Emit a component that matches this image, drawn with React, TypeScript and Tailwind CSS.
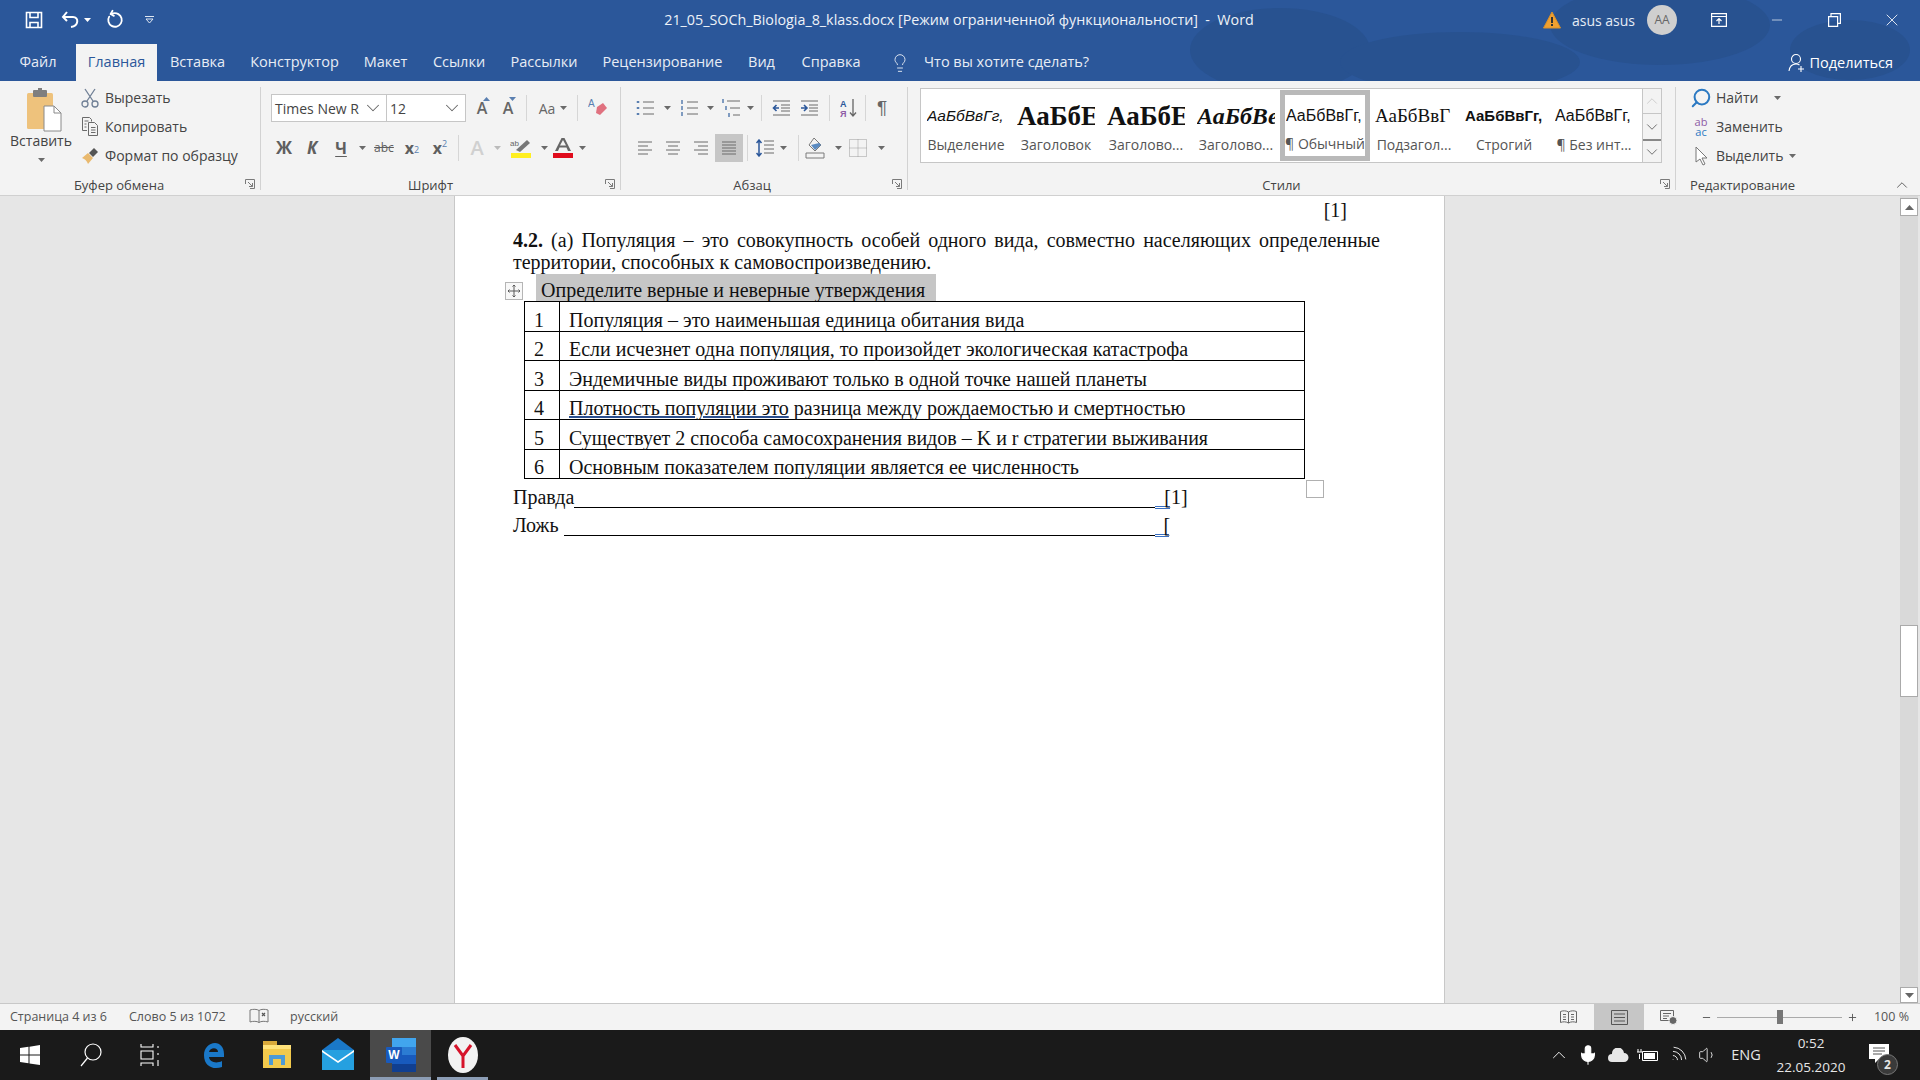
import type { ReactNode } from "react";
import { RotateCcw, Lightbulb, ChevronUp, ChevronDown, Minus, Plus, X, Search, Mic, Wifi, Volume1 } from "lucide-react";

const TABS = [
  { label: "Файл", w: "w-[76px]" },
  { label: "Главная", w: "w-[81px]", active: true },
  { label: "Вставка", w: "w-[81px]" },
  { label: "Конструктор", w: "w-[113px]" },
  { label: "Макет", w: "w-[69px]" },
  { label: "Ссылки", w: "w-[78px]" },
  { label: "Рассылки", w: "w-[92px]" },
  { label: "Рецензирование", w: "w-[145px]" },
  { label: "Вид", w: "w-[53px]" },
  { label: "Справка", w: "w-[86px]" },
];

const STYLES = [
  { sample: "АаБбВвГг,", label: "Выделение", cls: "italic text-[15.5px] font-['Liberation_Sans']" },
  { sample: "АаБбЕ", label: "Заголовок", cls: "font-bold text-[27px] font-['Liberation_Serif']" },
  { sample: "АаБбЕ", label: "Заголово...", cls: "font-bold text-[27px] font-['Liberation_Serif']" },
  { sample: "АаБбВе", label: "Заголово...", cls: "font-bold italic text-[24px] font-['Liberation_Serif']" },
  { sample: "АаБбВвГг,", label: "¶ Обычный", cls: "text-[16px] font-['Liberation_Sans']", selected: true },
  { sample: "АаБбВвГ", label: "Подзагол...", cls: "text-[19px] font-['Liberation_Serif']" },
  { sample: "АаБбВвГг,", label: "Строгий", cls: "font-bold text-[15px] font-['Liberation_Sans']" },
  { sample: "АаБбВвГг,", label: "¶ Без инт...", cls: "text-[16px] font-['Liberation_Sans']" },
];

const ROWS = [
  "Популяция – это наименьшая единица обитания вида",
  "Если исчезнет одна популяция, то произойдет экологическая катастрофа",
  "Эндемичные виды проживают только в одной точке нашей планеты",
  "",
  "Существует 2 способа самосохранения видов – K и r стратегии выживания",
  "Основным показателем популяции является ее численность",
];

function Caret({ className = "" }: { className?: string }) {
  return (
    <svg width="7" height="4" viewBox="0 0 7 4" className={className}>
      <path d="M0 0h7L3.5 4z" fill="#6a6a6a" />
    </svg>
  );
}

function Cell({ className = "", children }: { className?: string; children?: ReactNode }) {
  return <div className={`flex items-center justify-center shrink-0 ${className}`}>{children}</div>;
}

function Launcher() {
  return (
    <svg width="10" height="10" viewBox="0 0 10 10" className="absolute right-[5px] bottom-[6px]" fill="none" stroke="#7a7a7a">
      <path d="M.5 5V.5H9.5V9.5H5" />
      <path d="M3 3l4.5 4.5M7.5 4v3.5H4" />
    </svg>
  );
}

function Group({ label, width, labelCls, children }: { label: string; width: string; labelCls: string; children: ReactNode }) {
  return (
    <div className={`relative flex flex-col shrink-0 h-full pt-[13px] ${width}`}>
      <div className="flex flex-col gap-[12px]">{children}</div>
      <div className={`mt-auto h-[22px] pt-[3px] flex items-center justify-center text-[13px] text-[#444] ${labelCls}`}>{label}</div>
    </div>
  );
}

function Divider() {
  return <div className="w-px h-[103px] mt-[6px] bg-[#d2d2d2] shrink-0" />;
}

function MiniSep() {
  return <div className="w-px h-[26px] bg-[#d6d6d6] shrink-0" />;
}

function Lines({ kind }: { kind: "left" | "center" | "right" | "justify" }) {
  const d = {
    left: "M1 2h14M1 6h10M1 10h14M1 14h10",
    center: "M1 2h14M3 6h10M1 10h14M3 14h10",
    right: "M1 2h14M5 6h10M1 10h14M5 14h10",
    justify: "M1 2h14M1 5h14M1 8h14M1 11h14M1 14h14",
  }[kind];
  return (
    <svg width="16" height="16" viewBox="0 0 16 16" fill="none" stroke="#6a6a6a">
      <path d={d} />
    </svg>
  );
}

function PasteIcon() {
  return (
    <svg width="36" height="44" viewBox="0 0 36 44" className="ml-[8px]">
      <rect x="0" y="5" width="26" height="36" rx="1.5" fill="#eec27c" />
      <rect x="6" y="2" width="14" height="7" rx="1" fill="#7f7f7f" />
      <rect x="11" y="0" width="4" height="4" fill="#7f7f7f" />
      <path d="M17 18h10l7 7v18H17z" fill="#fff" stroke="#8a8a8a" />
      <path d="M27 18v7h7" fill="none" stroke="#8a8a8a" />
    </svg>
  );
}

function CutIcon() {
  return (
    <svg width="18" height="20" viewBox="0 0 18 20" fill="none" stroke="#6f7f95" strokeWidth="1.3">
      <path d="M4 1l8 12M14 1L6 13" />
      <circle cx="4" cy="16" r="3" />
      <circle cx="14" cy="16" r="3" />
    </svg>
  );
}

function CopyIcon() {
  return (
    <svg width="18" height="19" viewBox="0 0 18 19" fill="none" stroke="#6a6a6a">
      <path d="M6 13.5H1.5v-13h7l2 2v2" />
      <path d="M7.5 5.5h6l3 3v10h-9z" fill="#f3f3f3" />
      <path d="M3.5 4h4M3.5 7h2M3.5 10h2M10 10.5h4.5M10 13h4.5M10 15.5h4.5" />
    </svg>
  );
}

function PainterIcon() {
  return (
    <svg width="18" height="18" viewBox="0 0 18 18">
      <path d="M1 11l6-5 5 5-5 6c-1-3-3-5-6-6z" fill="#e9b96e" />
      <path d="M8 6l5-5 4 4-5 5z" fill="#555" />
    </svg>
  );
}

function BigA({ size }: { size: "up" | "down" }) {
  return (
    <div className="relative text-[16px] font-semibold text-[#666] leading-none">
      A
      <svg width="7" height="4" viewBox="0 0 7 4" className="absolute -top-[3px] -right-[3px]">
        <path d={size === "up" ? "M0 4h7L3.5 0z" : "M0 0h7L3.5 4z"} fill="#5a7fb0" />
      </svg>
    </div>
  );
}

function Eraser() {
  return (
    <svg width="20" height="20" viewBox="0 0 20 20">
      <path d="M9 9l6-4 4 5-7 7-4-2z" fill="#e0717f" />
      <text x="0" y="9" fontSize="10" fill="#5a7fb0" fontFamily="Liberation Sans">A</text>
    </svg>
  );
}

function UserPlus() {
  return (
    <svg width="18" height="20" viewBox="0 0 18 20" fill="none" stroke="#fff" strokeWidth="1.1">
      <circle cx="8" cy="6" r="4.5" />
      <path d="M1 18c.5-4 3-7 7-7 1.5 0 2.5.3 3.5 1M13 13v6M10 16h6" />
    </svg>
  );
}

function BlobBackdrop() {
  return (
    <svg className="absolute top-0 right-0 pointer-events-none" width="760" height="81" viewBox="0 0 760 81" fill="#285290">
      <ellipse cx="120" cy="50" rx="90" ry="42" />
      <ellipse cx="300" cy="62" rx="120" ry="30" />
      <ellipse cx="500" cy="25" rx="110" ry="40" />
      <ellipse cx="690" cy="50" rx="60" ry="30" />
    </svg>
  );
}

function TitleBar() {
  return (
    <div className="relative flex items-center h-[44px] pb-[4px] shrink-0 text-white">
      <Cell className="w-[20px] ml-[24px]">
        <svg width="18" height="18" viewBox="0 0 18 18" fill="none" stroke="#fff" strokeWidth="1.6">
          <path d="M1.5 1.5h15v15h-15z" />
          <path d="M5 1.5v5h8v-5M5 16.5v-5h8v5" />
        </svg>
      </Cell>
      <Cell className="w-[24px] ml-[15px]">
        <svg width="20" height="18" viewBox="0 0 20 18" fill="none" stroke="#fff" strokeWidth="2">
          <path d="M6 1L2 6l4 4" />
          <path d="M2 6h10c6 0 6 9-2 10" />
        </svg>
      </Cell>
      <Caret className="ml-[1px] [&>path]:fill-white" />
      <Cell className="w-[20px] ml-[14px]">
        <RotateCcw className="w-[18px] h-[18px] rotate-[30deg]" strokeWidth={2.4} />
      </Cell>
      <Cell className="w-[10px] ml-[19px]">
        <svg width="9" height="9" viewBox="0 0 9 9" fill="none" stroke="#dfe7f2">
          <path d="M0 .5h9M1 3l3.5 4L8 3z" />
        </svg>
      </Cell>
      <div className="absolute left-[664px] w-[590px] text-center text-[14.3px] text-[#eef2f8] whitespace-pre">
        21_05_SOCh_Biologia_8_klass.docx [Режим ограниченной функциональности]  -  Word
      </div>
      <div className="ml-auto flex items-center h-full">
        <svg width="18" height="18" viewBox="0 0 18 18">
          <path d="M9 1l8.5 16H.5z" fill="#f0a030" stroke="#d9902a" />
          <path d="M8 6h2v6H8zM8 13h2v2H8z" fill="#333" />
        </svg>
        <span className="ml-[11px] text-[14px] text-[#e6ecf5]">asus asus</span>
        <div className="ml-[12px] w-[30px] h-[30px] rounded-full bg-[#cfcfcf] flex items-center justify-center text-[12px] text-[#666]">AA</div>
        <Cell className="w-[58px] ml-[13px]">
          <svg width="16" height="14" viewBox="0 0 16 14" fill="none" stroke="#fff" strokeWidth="1.2">
            <path d="M.6.6h14.8v12.8H.6zM.6 3.5h14.8M8 11V6M5.5 8L8 5.5 10.500 8" />
          </svg>
        </Cell>
        <Cell className="w-[58px]">
          <Minus className="w-[16px] h-[16px] text-white" strokeWidth={1} />
        </Cell>
        <Cell className="w-[57px]">
          <svg width="13" height="14" viewBox="0 0 13 14" fill="none" stroke="#fff" strokeWidth="1.2">
            <path d="M.6 3.6h9v9.800h-9zM3 3.600V.6h9.400v9.800H9.600" />
          </svg>
        </Cell>
        <Cell className="w-[57px]">
          <X className="w-[20px] h-[20px] text-white" strokeWidth={1} />
        </Cell>
      </div>
    </div>
  );
}

function TabBar() {
  return (
    <div className="relative flex items-stretch h-[37px] shrink-0 text-[14.5px] text-[#e8edf5]">
      {TABS.map((t) => (
        <div key={t.label} className={`flex items-center justify-center shrink-0 pb-[2px] ${t.w} ${t.active ? "bg-[#f3f3f3] text-[#2b579a]" : ""}`}>
          {t.label}
        </div>
      ))}
      <Cell className="w-[20px] ml-[16px]">
        <Lightbulb className="w-[22px] h-[22px]" strokeWidth={1.1} />
      </Cell>
      <span className="ml-[14px] self-center pb-[2px]">Что вы хотите сделать?</span>
      <div className="ml-auto mr-[27px] flex items-center gap-[3px] text-white">
        <UserPlus />
        <span>Поделиться</span>
      </div>
    </div>
  );
}

function Ribbon() {
  return (
    <div className="flex h-[115px] shrink-0 bg-[#f3f3f3] border-b border-[#d0d0d0] text-[14px] text-[#444]">
      {/* clipboard */}
      <div className="relative flex flex-col shrink-0 w-[260px] h-full">
        <div className="flex h-[92px]">
          <div className="flex flex-col items-center w-[82px] pt-[7px] shrink-0">
            <PasteIcon />
            <span className="leading-[18px]">Вставить</span>
            <Caret className="mt-[8px]" />
          </div>
          <div className="flex flex-col pt-[2px] -ml-[1px]">
            <div className="flex items-center h-[29px] gap-[6px]">
              <Cell className="w-[18px]"><CutIcon /></Cell>Вырезать
            </div>
            <div className="flex items-center h-[29px] gap-[6px]">
              <Cell className="w-[18px]"><CopyIcon /></Cell>Копировать
            </div>
            <div className="flex items-center h-[29px] gap-[6px]">
              <Cell className="w-[18px]"><PainterIcon /></Cell>Формат по образцу
            </div>
          </div>
        </div>
        <div className="mt-auto h-[22px] pt-[3px] flex items-center justify-center text-[13px] pr-[22px]">Буфер обмена</div>
        <Launcher />
      </div>
      <Divider />

      {/* font */}
      <Group label="Шрифт" width="w-[359px] pl-[10px]" labelCls="pr-[30px]">
        <div className="flex items-center h-[28px]">
          <div className="flex h-[28px] w-[195px] shrink-0 bg-white border border-[#c6c6c6]">
            <div className="w-[115px] flex items-center justify-between pl-[3px] pr-[2px] border-r border-[#c6c6c6] whitespace-nowrap overflow-hidden">
              <span>Times New R</span>
              <ChevronDown className="w-[22px] h-[22px] shrink-0 text-[#666]" strokeWidth={1.1} />
            </div>
            <div className="flex-1 flex items-center justify-between pl-[3px] pr-[2px]">
              <span>12</span>
              <ChevronDown className="w-[22px] h-[22px] text-[#666]" strokeWidth={1.1} />
            </div>
          </div>
          <Cell className="w-[24px] ml-[4px]"><BigA size="up" /></Cell>
          <Cell className="w-[24px] ml-[2px]"><BigA size="down" /></Cell>
          <div className="ml-[6px]"><MiniSep /></div>
          <Cell className="w-[34px] pl-[6px] gap-[4px] text-[#666]">Aa</Cell>
          <Caret className="-ml-[1px]" />
          <div className="ml-[10px]"><MiniSep /></div>
          <Cell className="w-[40px]"><Eraser /></Cell>
        </div>
        <div className="flex items-center h-[28px] text-[#5f5f5f]">
          <Cell className="w-[26px] font-bold text-[17px]">Ж</Cell>
          <Cell className="w-[30px] font-bold italic text-[17px]">К</Cell>
          <Cell className="w-[28px] font-bold text-[16px] underline underline-offset-2">Ч</Cell>
          <Cell className="w-[14px]"><Caret /></Cell>
          <Cell className="w-[30px] text-[12px] line-through">abc</Cell>
          <Cell className="w-[26px] font-bold text-[16px]">x<sub className="text-[9px] font-normal text-[#5a7fb0]">2</sub></Cell>
          <Cell className="w-[30px] font-bold text-[16px]">x<sup className="text-[9px] font-normal text-[#5a7fb0]">2</sup></Cell>
          <Cell className="w-[7px]"><MiniSep /></Cell>
          <Cell className="w-[30px] text-[20px] text-[#d0d0d0] font-semibold">A</Cell>
          <Cell className="w-[10px]"><Caret className="opacity-40" /></Cell>
          <Cell className="w-[38px]">
            <svg width="22" height="20" viewBox="0 0 22 20">
              <text x="0" y="8" fontSize="8" fill="#666" fontFamily="Liberation Sans">ab</text>
              <path d="M6 12L17 2l3 3-10 9z" fill="#777" />
              <rect x="1" y="15" width="20" height="5" fill="#ffef20" />
            </svg>
          </Cell>
          <Cell className="w-[8px]"><Caret /></Cell>
          <Cell className="w-[30px]">
            <svg width="22" height="22" viewBox="0 0 22 22" className="shrink-0">
              <path d="M3 14L9.500 1h3L19 14h-3l-1.500-3.500h-7L6 14zM8 8.500h6L11 3z" fill="#666" />
              <rect x="1" y="16" width="20" height="5" fill="#e00b1c" />
            </svg>
          </Cell>
          <Cell className="w-[8px]"><Caret /></Cell>
        </div>
        <Launcher />
      </Group>
      <Divider />

      {/* paragraph */}
      <Group label="Абзац" width="w-[286px] pl-[10px]" labelCls="pr-[34px]">
        <div className="flex items-center h-[28px]">
          <Cell className="w-[28px]">
            <svg width="18" height="16" viewBox="0 0 18 16" fill="none" stroke="#6a6a6a">
              <path d="M7 2h11M7 8h11M7 14h11" />
              <path d="M2 1v2M2 7v2M2 13v2" stroke="#5a7fb0" strokeWidth="2.500" />
            </svg>
          </Cell>
          <Cell className="w-[16px]"><Caret /></Cell>
          <Cell className="w-[28px]">
            <svg width="18" height="18" viewBox="0 0 18 18" fill="none" stroke="#6a6a6a">
              <path d="M7 3h11M7 9h11M7 15h11" />
              <path d="M2 1v4M2 7v4M2 13v4" stroke="#5a7fb0" strokeWidth="1.500" />
            </svg>
          </Cell>
          <Cell className="w-[14px]"><Caret /></Cell>
          <Cell className="w-[28px]">
            <svg width="20" height="18" viewBox="0 0 20 18" fill="none" stroke="#6a6a6a">
              <path d="M6 2h13M9 9h10M12 16h7" />
              <path d="M2 0v4M5 7v4M8 14v4" stroke="#5a7fb0" strokeWidth="1.500" />
            </svg>
          </Cell>
          <Cell className="w-[10px]"><Caret /></Cell>
          <Cell className="w-[12px]"><MiniSep /></Cell>
          <Cell className="w-[28px]">
            <svg width="18" height="16" viewBox="0 0 18 16" fill="none" stroke="#6a6a6a">
              <path d="M1 1h17M9 5h9M9 8h9M9 11h9M1 15h17" />
              <path d="M7 8H2M4.500 5L1.500 8l3 3" stroke="#2b579a" strokeWidth="1.600" />
            </svg>
          </Cell>
          <Cell className="w-[28px]">
            <svg width="18" height="16" viewBox="0 0 18 16" fill="none" stroke="#6a6a6a">
              <path d="M1 1h17M9 5h9M9 8h9M9 11h9M1 15h17" />
              <path d="M1 8h5M4 5l3 3-3 3" stroke="#2b579a" strokeWidth="1.600" />
            </svg>
          </Cell>
          <Cell className="w-[12px]"><MiniSep /></Cell>
          <Cell className="w-[28px]">
            <svg width="18" height="20" viewBox="0 0 18 20" fill="none">
              <text x="0" y="9" fontSize="9" fontWeight="700" fill="#2b579a" fontFamily="Liberation Sans">А</text>
              <text x="0" y="19" fontSize="9" fontWeight="700" fill="#8e5ba6" fontFamily="Liberation Sans">Я</text>
              <path d="M13 1v17M10 14.500l3 3.500 3-3.500" stroke="#666" strokeWidth="1.300" />
            </svg>
          </Cell>
          <Cell className="w-[4px]"><MiniSep /></Cell>
          <Cell className="w-[30px] text-[19px] text-[#666] font-['Liberation_Sans']">¶</Cell>
        </div>
        <div className="flex items-center h-[28px]">
          <Cell className="w-[28px]"><Lines kind="left" /></Cell>
          <Cell className="w-[28px]"><Lines kind="center" /></Cell>
          <Cell className="w-[28px]"><Lines kind="right" /></Cell>
          <Cell className="w-[28px] h-[28px] bg-[#c6c6c6]"><Lines kind="justify" /></Cell>
          <Cell className="w-[9px]"><MiniSep /></Cell>
          <Cell className="w-[26px]">
            <svg width="18" height="18" viewBox="0 0 18 18" fill="none" stroke="#6a6a6a">
              <path d="M8 2h10M8 6h10M8 10h10M8 14h10" />
              <path d="M3 1v16M.5 4L3 1l2.500 3M.5 14L3 17l2.500-3" stroke="#2b579a" strokeWidth="1.500" />
            </svg>
          </Cell>
          <Cell className="w-[10px]"><Caret /></Cell>
          <Cell className="w-[20px]"><MiniSep /></Cell>
          <Cell className="w-[16px]">
            <svg width="22" height="22" viewBox="0 0 22 22" fill="none" stroke="#7a7a7a" className="shrink-0">
              <path d="M9 1l7 7-6 6-6-6z" />
              <path d="M14 6l-8 2 4 5 6-5z" fill="#5a8ac0" stroke="none" />
              <path d="M1 16h18v5H1z" fill="#f3f3f3" />
            </svg>
          </Cell>
          <Cell className="w-[28px]"><Caret /></Cell>
          <Cell className="w-[12px]">
            <svg width="18" height="18" viewBox="0 0 18 18" fill="none" stroke="#9a9a9a" strokeDasharray="1 1" className="shrink-0">
              <path d="M.5.5h17v17H.5zM9 .5v17M.5 9h17" />
            </svg>
          </Cell>
          <Cell className="w-[34px]"><Caret /></Cell>
        </div>
        <Launcher />
      </Group>
      <Divider />

      {/* styles */}
      <Group label="Стили" width="w-[767px] pl-[12px]" labelCls="pr-[32px]">
        <div className="flex h-[75px] -mt-[6px]">
          <div className="flex w-[722px] shrink-0 bg-white border border-[#c6c6c6] border-r-0 overflow-hidden">
            {STYLES.map((s, i) => (
              <div
                key={i}
                className={`flex flex-col items-center shrink-0 w-[90px] overflow-hidden ${
                  s.selected ? "mt-[1px] h-[71px] pt-[2px] border-[5px] border-[#b9b9b9] -mx-[1px]" : "pt-[8px]"
                }`}
              >
                <div className={`h-[38px] w-[78px] shrink-0 flex items-center justify-start overflow-hidden whitespace-nowrap text-[#111] ${s.cls}`}>
                  {s.sample}
                </div>
                <div className={`text-[14px] leading-[20px] text-[#555] whitespace-nowrap ${s.selected ? "-mt-[1px]" : ""}`}>{s.label}</div>
              </div>
            ))}
          </div>
          <div className="flex flex-col w-[20px] shrink-0 border border-[#c6c6c6] bg-[#f3f3f3]">
            <Cell className="h-[25px] border-b border-[#c6c6c6]">
              <ChevronUp className="w-[20px] h-[20px] text-[#c6c6c6]" strokeWidth={1.1} />
            </Cell>
            <Cell className="h-[25px]">
              <ChevronDown className="w-[20px] h-[20px] text-[#555]" strokeWidth={1.1} />
            </Cell>
            <Cell className="flex-1 border-t-2 border-[#888]">
              <ChevronDown className="w-[20px] h-[20px] text-[#555]" strokeWidth={1.1} />
            </Cell>
          </div>
        </div>
        <Launcher />
      </Group>
      <Divider />

      {/* editing */}
      <div className="relative flex flex-col shrink-0 w-[133px] h-full pl-[16px]">
        <div className="flex flex-col pt-[2px]">
          <div className="flex items-center h-[29px] gap-[6px]">
            <Cell className="w-[18px]">
              <Search className="w-[22px] h-[22px] shrink-0 text-[#2b79c2] -scale-x-100" strokeWidth={2.2} />
            </Cell>
            Найти
            <Caret className="ml-[9px]" />
          </div>
          <div className="flex items-center h-[29px] gap-[6px]">
            <div className="w-[18px] shrink-0 flex flex-col items-center text-[11px] leading-[10px]">
              <span className="text-[#8e5ba6]">ab</span>
              <span className="text-[#2b79c2]">ac</span>
            </div>
            Заменить
          </div>
          <div className="flex items-center h-[29px] gap-[6px]">
            <Cell className="w-[18px]">
              <svg width="14" height="20" viewBox="0 0 14 20" fill="#fff" stroke="#777">
                <path d="M2 1v15l4-3 3 6 2-1-3-6h5z" />
              </svg>
            </Cell>
            Выделить
            <Caret />
          </div>
        </div>
        <div className="mt-auto h-[22px] pt-[3px] flex items-center justify-center text-[13px] -ml-[16px]">Редактирование</div>
      </div>
      <div className="flex-1 flex items-end justify-end pr-[9px] pb-[1px]">
        <ChevronUp className="w-[18px] h-[18px] text-[#555]" strokeWidth={1.2} />
      </div>
    </div>
  );
}

function Page() {
  return (
    <div className="relative w-[991px] h-full bg-white border-x border-[#c8c8c8] pl-[58px] pt-[3px] text-[20px] leading-[22px] text-[#111] font-['Liberation_Serif']">
      <div className="text-right pr-[97px]">[1]</div>
      <p className="mt-[8px] w-[867px] text-justify">
        <b>4.2.</b> (а) Популяция – это совокупность особей одного вида, совместно населяющих определенные территории, способных к самовоспроизведению.
      </p>
      <div className="relative ml-[23px] mt-[1px] w-[400px] h-[27px] bg-[#c6c6c6] pl-[5px] flex items-end whitespace-nowrap">
        Определите верные и неверные утверждения
        <div className="absolute -left-[31px] top-[8px] w-[18px] h-[18px] border border-[#b5b5b5] bg-[#f8f8f8] flex items-center justify-center">
          <svg width="14" height="14" viewBox="0 0 14 14" fill="none" stroke="#5a5a5a">
            <path d="M7 1v12M1 7h12M5.500 2.500L7 1l1.500 1.500M5.500 11.500L7 13l1.500-1.500M2.500 5.500L1 7l1.500 1.500M11.500 5.500L13 7l-1.500 1.500" />
          </svg>
        </div>
      </div>
      <div className="relative ml-[11px] w-[781px]">
        <table className="w-[781px] border-collapse border border-black leading-[21px]">
          <tbody>
            {ROWS.map((r, i) => (
              <tr key={i} className="h-[29.5px]">
                <td className="w-[35px] border border-black pl-[9px] text-left align-bottom">{i + 1}</td>
                <td className="border border-black pl-[9px] align-bottom whitespace-nowrap">
                  {i === 3 ? (
                    <>
                      <span className="underline decoration-[#2b4f8f] underline-offset-[1px]">Плотность популяции это</span> разница между рождаемостью и смертностью
                    </>
                  ) : (
                    r
                  )}
                </td>
              </tr>
            ))}
          </tbody>
        </table>
        <div className="absolute -right-[19px] -bottom-[19px] w-[18px] h-[18px] border border-[#b0b0b0] bg-white" />
      </div>
      <div className="mt-[7px] h-[28px] flex items-start whitespace-nowrap">
        Правда
        <span className="w-[581px] h-[22px] border-b border-black" />
        <span className="w-[15px] h-[23px] border-b-[3px] border-double border-[#3a6fc0] shrink-0" />
        <span className="-ml-[6px]">[1]</span>
      </div>
      <div className="h-[28px] flex items-start whitespace-nowrap">
        Ложь
        <span className="ml-[5px] w-[591px] h-[22px] border-b border-black" />
        <span className="w-[14px] h-[23px] border-b-[3px] border-double border-[#3a6fc0] shrink-0" />
        <span className="-ml-[5px]">[</span>
      </div>
    </div>
  );
}

function Scrollbar() {
  return (
    <div className="flex flex-col w-[18px] h-full bg-[#d9d9d9]">
      <Cell className="h-[18px] mt-[2px] bg-white border border-[#aaa]">
        <svg width="9" height="5" viewBox="0 0 9 5"><path d="M0 5h9L4.500 0z" fill="#666" /></svg>
      </Cell>
      <div className="h-[409px] shrink-0" />
      <div className="h-[72px] bg-white border border-[#aaa] shrink-0" />
      <Cell className="h-[16px] mt-auto bg-white border border-[#aaa]">
        <svg width="9" height="5" viewBox="0 0 9 5"><path d="M0 0h9L4.500 5z" fill="#666" /></svg>
      </Cell>
    </div>
  );
}

function StatusBar() {
  return (
    <div className="flex items-center h-[27px] shrink-0 bg-[#f3f3f3] border-t border-[#c8c8c8] text-[12.5px] text-[#555]">
      <span className="ml-[10px] w-[119px] shrink-0">Страница 4 из 6</span>
      <span className="w-[120px] shrink-0">Слово 5 из 1072</span>
      <svg width="20" height="18" viewBox="0 0 20 18" fill="none" stroke="#777">
        <path d="M10 2.500C8 1 4 1 1 2v12c3-1 7-1 9 .5 2-1.500 6-1.500 9-.5V2c-3-1-7-1-9 .5zM10 2.500v12" />
        <path d="M13 5l3 3M16 5l-3 3" stroke="#555" strokeWidth="1.200" />
      </svg>
      <span className="ml-[21px]">русский</span>
      <div className="ml-auto flex items-center h-full">
        <Cell className="w-[17px]">
          <svg width="17" height="15" viewBox="0 0 17 15" fill="none" stroke="#666">
            <path d="M8.500 2C6 .5 3 .5.5 1.500v11C3 11.500 6 11.500 8.500 13c2.500-1.500 5.500-1.500 8-.5v-11C14 .5 11 .5 8.500 2zM8.500 2v11M3 4.500h3M3 7h3M3 9.500h3M11 4.500h3M11 7h3M11 9.500h3" />
          </svg>
        </Cell>
        <Cell className="w-[50px] h-full bg-[#c6c6c6] ml-[17px]">
          <svg width="17" height="15" viewBox="0 0 17 15" fill="none" stroke="#555">
            <path d="M.5.5h16v14H.5zM3 4h11M3 7.500h11M3 11h11" />
          </svg>
        </Cell>
        <Cell className="w-[50px]">
          <svg width="18" height="15" viewBox="0 0 18 15" fill="none" stroke="#666">
            <path d="M.5.5h13v10H.5zM3 3.500h8M3 6h6M3 8.500h4" />
            <circle cx="13" cy="10.500" r="4" fill="#666" stroke="#f3f3f3" />
          </svg>
        </Cell>
        <Minus className="ml-[7px] w-[11px] h-[11px] text-[#555]" />
        <div className="relative ml-[5px] w-[125px] h-px bg-[#aaa]">
          <div className="absolute left-[60px] -top-[7px] w-[6px] h-[14px] bg-[#777]" />
        </div>
        <Plus className="ml-[5px] w-[11px] h-[11px] text-[#555]" />
        <span className="ml-[9px] mr-[11px] w-[42px] text-right">100 %</span>
      </div>
    </div>
  );
}

function Taskbar() {
  return (
    <div className="flex items-stretch h-[50px] shrink-0 bg-[#1a1a1a] text-[#e6e6e6]">
      <Cell className="w-[60px]">
        <svg width="20" height="20" viewBox="0 0 20 20" fill="#fff">
          <path d="M0 3l8.500-1.200v7.600H0zM9.500 1.700L20 0v9.400H9.500zM0 10.500h8.500v7.700L0 17zM9.500 10.500H20V20L9.500 18.400z" />
        </svg>
      </Cell>
      <Cell className="w-[61px]">
        <svg width="22" height="24" viewBox="0 0 22 24" fill="none" stroke="#fff" strokeWidth="1.200">
          <circle cx="13" cy="9" r="8" />
          <path d="M7.500 15L1 23" />
        </svg>
      </Cell>
      <Cell className="w-[58px]">
        <svg width="20" height="24" viewBox="0 0 20 24" fill="none" stroke="#fff" strokeWidth="1.100">
          <path d="M1 1v3h12V1M1 8h12v8H1zM1 23v-3h12v3M18 3v2M18 10v2M18 17v6" />
        </svg>
      </Cell>
      <Cell className="w-[67px]">
        <svg width="26" height="30" viewBox="0 0 26 30" fill="none">
          <path d="M4 15C4 8 9 3 15 3c5 0 9 4 9 11v3H9c.5 5 7 7 13 4v6c-8 3-18 0-18-12z" fill="#1a78c8" />
          <path d="M9 12h9c0-5-8-5-9 0z" fill="#1a1a1a" />
        </svg>
      </Cell>
      <Cell className="w-[61px]">
        <svg width="28" height="30" viewBox="0 0 28 30">
          <path d="M0 1h11l3 4h14v23H0z" fill="#f2c94c" />
          <rect x="0" y="1" width="14" height="4" fill="#d9a93a" />
          <rect x="0" y="5" width="28" height="4" fill="#ffe27a" />
          <path d="M6 15h16v10H6z" fill="#4c9ad6" />
          <rect x="10" y="19" width="8" height="6" fill="#f2c94c" />
        </svg>
      </Cell>
      <Cell className="w-[63px] pr-[1px]">
        <svg width="32" height="34" viewBox="0 0 32 34">
          <path d="M16 0l16 12H0z" fill="#1a78c8" />
          <rect x="0" y="12" width="32" height="20" fill="#25a0e0" />
          <path d="M0 12l16 11 16-11v2L16 25 0 14z" fill="#fff" />
        </svg>
      </Cell>
      <div className="relative flex items-center justify-center w-[61px] bg-[#4a4a4a]">
        <svg width="30" height="34" viewBox="0 0 30 34">
          <rect x="6" y="0" width="24" height="34" rx="1" fill="#2b7cd3" />
          <rect x="6" y="0" width="24" height="9" fill="#41a5ee" />
          <rect x="6" y="17" width="24" height="9" fill="#185abd" />
          <rect x="6" y="26" width="24" height="8" fill="#103f91" />
          <rect x="0" y="9" width="16" height="16" rx="1" fill="#185abd" />
          <text x="8" y="21" textAnchor="middle" fontSize="12" fontWeight="700" fill="#fff" fontFamily="Liberation Sans">W</text>
        </svg>
        <div className="absolute bottom-0 inset-x-0 h-[3px] bg-[#8c9db5]" />
      </div>
      <div className="relative flex items-center justify-center w-[51px] ml-[6px]">
        <svg width="30" height="36" viewBox="0 0 30 36">
          <ellipse cx="15" cy="18" rx="15" ry="18" fill="#f2f2f2" />
          <path d="M7 8l8 11 8-11M15 19v12" fill="none" stroke="#d6132a" strokeWidth="3" />
        </svg>
        <div className="absolute bottom-0 inset-x-0 h-[3px] bg-[#8c9db5]" />
      </div>
      <div className="ml-auto flex items-center">
        <ChevronUp className="w-[22px] h-[22px] text-white" strokeWidth={1} />
        <Cell className="w-[30px] ml-[3px]"><Mic className="w-[22px] h-[24px] text-white" fill="#fff" strokeWidth={1.2} /></Cell>
        <Cell className="w-[30px]">
          <svg width="22" height="14" viewBox="0 0 22 14" fill="#e6e6e6">
            <path d="M5 14a4 4 0 010-8 6 6 0 0112-1 4.500 4.500 0 010 9z" />
          </svg>
        </Cell>
        <Cell className="w-[30px]">
          <svg width="22" height="14" viewBox="0 0 22 14" fill="#fff" stroke="#fff">
            <path d="M5.500 3.500h15v9h-15z" fill="none" />
            <path d="M7 5h11v6H7z" stroke="none" />
            <path d="M1 1v3M4 1v3M0 4h5M2.500 6v5" fill="none" />
          </svg>
        </Cell>
        <Cell className="w-[30px]"><Wifi className="w-[20px] h-[20px] rotate-45 text-white" strokeWidth={1} /></Cell>
        <Cell className="w-[30px]"><Volume1 className="w-[20px] h-[20px] text-white" strokeWidth={1} /></Cell>
        <span className="ml-[5px] w-[36px] text-center text-[14.5px]">ENG</span>
        <div className="w-[94px] flex flex-col items-center text-[13.5px] leading-[24px]">
          <span>0:52</span>
          <span>22.05.2020</span>
        </div>
        <div className="relative w-[45px] h-full mr-[17px] flex items-center">
          <svg width="20" height="20" viewBox="0 0 20 20" className="ml-[11px] -mt-[2px]">
            <path d="M0 0h20v15H10l-4 4v-4H0z" fill="#fff" />
            <path d="M4 4h12M4 7h12M4 10h9" stroke="#555" />
          </svg>
          <span className="absolute left-[19px] top-[24px] w-[21px] h-[21px] rounded-full bg-[#3a3a3a] border border-[#777] text-center text-[12px] leading-[19px] font-bold">2</span>
        </div>
      </div>
    </div>
  );
}

export default function App() {
  return (
    <div className="flex flex-col w-[1920px] h-[1080px] overflow-hidden font-['Open_Sans',sans-serif]">
      <div className="relative bg-[#2b579a]">
        <BlobBackdrop />
        <TitleBar />
        <TabBar />
      </div>
      <Ribbon />
      <div className="flex flex-1 min-h-0 bg-[#e6e6e6]">
        <div className="w-[454px] shrink-0" />
        <Page />
        <div className="flex-1" />
        <Scrollbar />
        <div className="w-[2px] shrink-0" />
      </div>
      <StatusBar />
      <Taskbar />
    </div>
  );
}
